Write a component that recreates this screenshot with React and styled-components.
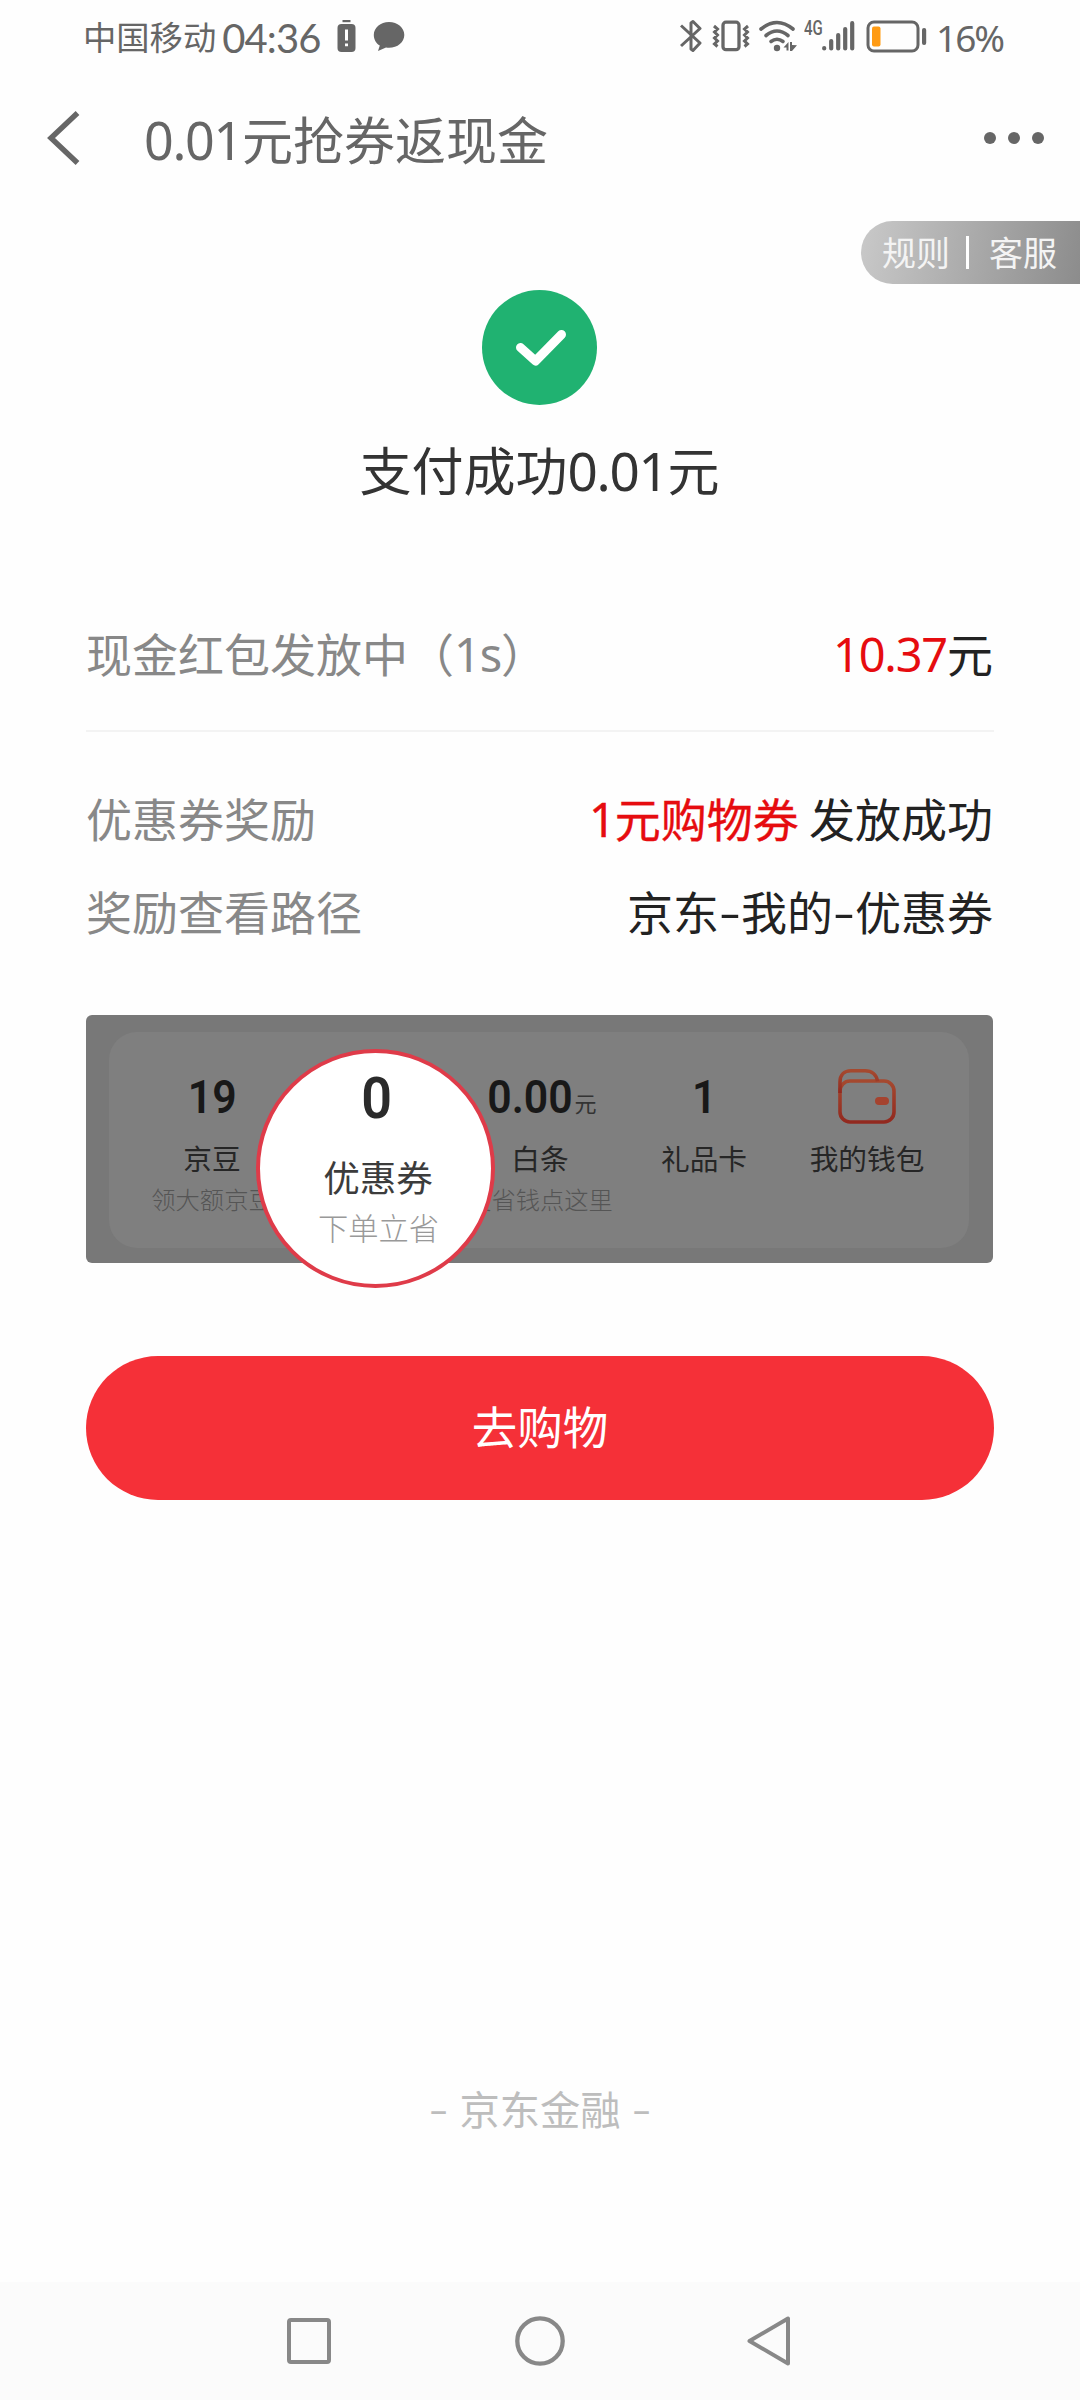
import React from "react";
import styled, { createGlobalStyle } from "styled-components";

const GlobalStyle = createGlobalStyle`
  body {
    margin: 0;
    background: #fefefe;
  }

  * {
    box-sizing: border-box;
  }
`;

const Screen = styled.div`
  display: flex;
  flex-direction: column;
  width: 1080px;
  height: 2400px;
  overflow: hidden;
  background: #fefefe;
  color: #222;
  font-family: "Noto Sans CJK SC", sans-serif;
  white-space: nowrap;
`;

/* Latin digits inside Chinese text */
const Num = styled.span`
  font-family: "Noto Sans", sans-serif;
  font-size: 1.02em;
  letter-spacing: -0.025em;
  line-height: 1;
`;

/* Status bar */
const StatusBar = styled.div`
  display: flex;
  align-items: center;
  justify-content: space-between;
  height: 72px;
  padding: 0 74px 0 83px;
  color: #666;
`;

const StatusGroup = styled.div`
  display: flex;
  align-items: center;

  svg {
    display: block;
  }
`;

const Spacer = styled.span`
  width: ${(props) => props.$width}px;
`;

const Carrier = styled.span`
  font-size: 33.3px;
  line-height: 50px;
`;

const Clock = styled.span`
  width: 98px;
  margin: 4px 17px 0 6px;
  font-family: Lato, sans-serif;
  font-size: 40px;
  letter-spacing: -0.9px;
  line-height: 50px;
`;

const Network = styled.span`
  width: 18px;
  margin: 0 0 17px 7px;
  font-family: Roboto, sans-serif;
  font-size: 20px;
  font-weight: 500;
  line-height: 20px;
  transform: scaleX(0.75);
  transform-origin: left;
`;

const Percent = styled.span`
  width: 70px;
  margin: 3px 0 0 9px;
  font-family: "Noto Sans", sans-serif;
  font-size: 37px;
  letter-spacing: -2px;
  line-height: 50px;
`;

/* Title bar */
const TitleBar = styled.div`
  display: flex;
  align-items: center;
  height: 131px;
  padding: 0 36px 0 46px;
  color: #666;
`;

const Title = styled.h1`
  flex: 1;
  margin: 0 0 0 62px;
  font-size: 51px;
  font-weight: 400;
  line-height: 74px;
`;

const HelpPill = styled.div`
  display: flex;
  align-items: center;
  align-self: flex-end;
  width: 219px;
  height: 63px;
  margin-top: 18px;
  padding-left: 21px;
  border-radius: 32px 0 0 32px;
  background: linear-gradient(100deg, #c9c9c9, #8c8c8c);
  color: #f4f4f4;
  font-size: 34px;
  line-height: 58px;

  span {
    margin-bottom: 2px;
  }
`;

const PillDivider = styled.i`
  width: 3px;
  height: 33px;
  margin: 0 20px 0 16px;
  background: #fff;
`;

/* Payment result */
const Result = styled.div`
  display: flex;
  flex-direction: column;
  align-items: center;
  margin: 6px 1px 0 0;
`;

const ResultText = styled.div`
  margin-top: 29px;
  color: #333;
  font-size: 52px;
  line-height: 70px;
`;

const Details = styled.div`
  display: flex;
  flex-direction: column;
  margin: 102px 87px 0 86px;
`;

const Row = styled.div`
  display: flex;
  justify-content: space-between;
  font-size: 46px;
  line-height: 92.5px;
`;

const Label = styled.span`
  color: #888;
`;

const Red = styled.span`
  color: #e60c0f;
  -webkit-text-stroke: ${(props) => (props.$medium ? "0.35px" : "0")} #e60c0f;
`;

const Divider = styled.div`
  height: 2px;
  margin: 31.5px -1px 39px 0;
  background: #f3f3f3;
`;

const Dash = styled.span`
  display: inline-block;
  width: ${(props) => props.$width}px;
  text-align: center;
  transform: scaleX(1.4) translateY(-1px);
`;

/* Dimmed account card with the coupon column magnified */
const Preview = styled.div`
  position: relative;
  height: 248px;
  margin-top: 59px;
  padding: 17px 24px 15px 23px;
  border-radius: 6px;
  background: #787878;
`;

const Panel = styled.div`
  display: grid;
  grid-template-columns: repeat(4, 164px) 162px;
  justify-content: center;
  height: 216px;
  padding: 37px 0 0;
  border-radius: 28px;
  background: #7f7f7f;
`;

const Column = styled.div`
  display: flex;
  flex-direction: column;
  align-items: center;
  color: #262626;
`;

const Value = styled.div`
  display: flex;
  align-items: baseline;
  justify-content: center;
  height: 56px;
  color: #181818;
  line-height: 56px;
`;

const Digits = styled.span`
  font-family: Roboto, sans-serif;
  font-size: ${(props) => props.$size || 46}px;
  font-weight: 600;
  line-height: 56px;
  transform: scaleX(0.93);
`;

const Unit = styled.span`
  margin-left: -1px;
  color: #333;
  font-size: 22px;
  transform: translateY(-1px);
`;

const Name = styled.div`
  margin-top: 12px;
  font-size: 28.7px;
  line-height: 42px;
`;

const Hint = styled.div`
  margin-top: 1px;
  color: #555;
  font-size: 24.3px;
  font-weight: 300;
  line-height: 38px;
`;

const Lens = styled.div`
  position: absolute;
  top: 34px;
  left: 170px;
  display: flex;
  flex-direction: column;
  align-items: center;
  width: 239px;
  height: 239px;
  padding: 17px 0 0 2px;
  border: 4px solid #df3b49;
  border-radius: 50%;
  background: #fff;
  color: #2b2b2b;
`;

const LensName = styled.div`
  margin: 24px 0 0 3px;
  color: #3c3c3c;
  font-size: 36.6px;
  line-height: 54px;
`;

const LensHint = styled.div`
  margin-left: 4px;
  color: #999;
  font-size: 30.3px;
  font-weight: 300;
  line-height: 46px;
`;

const ShopButton = styled.button`
  height: 144px;
  margin: 93px -1px 0 0;
  padding: 0 0 6px;
  border: 0;
  border-radius: 72px;
  background: #f53038;
  color: #fff;
  font-family: inherit;
  font-size: 45.5px;
`;

const Footer = styled.div`
  margin: auto 0 149px;
  color: #bdbdbd;
  font-size: 40.3px;
  line-height: 50px;
  text-align: center;
`;

const NavBar = styled.div`
  display: flex;
  align-items: center;
  justify-content: space-between;
  height: 118px;
  padding: 0 288px 0 285px;
  background: #fbfbfb;
`;

const BatteryAlertIcon = () => (
  <svg width="19" height="33" viewBox="0 0 19 33">
    <rect x="5.5" y="0" width="8" height="2.2" fill="#666" />
    <rect x="0.5" y="4" width="18" height="28" rx="4" fill="#666" />
    <path d="M9.5 9.5v11M9.5 23.5v2.8" stroke="#fff" strokeWidth="3" />
  </svg>
);

const ChatIcon = () => (
  <svg width="32" height="31" viewBox="0 0 32 31">
    <path
      d="M16 1C7.5 1 .8 6.8.8 14c0 4.6 2.4 8.5 6 10.5L5 30l8-3.5c1 .2 2 .3 3 .3 8.6 0 15.3-5.6 15.3-12.8S24.6 1 16 1z"
      fill="#666"
    />
  </svg>
);

const BluetoothIcon = () => (
  <svg width="22" height="34" viewBox="0 0 22 34">
    <path
      d="M1 6.5L20 24l-7 7.5-2-1.500V4l2-1.500L20 9.500 1 27"
      fill="none"
      stroke="#666"
      strokeWidth="3"
      strokeLinejoin="round"
    />
  </svg>
);

const VibrateIcon = () => (
  <svg width="38" height="32" viewBox="0 0 38 32" fill="none" stroke="#666">
    <rect x="11" y="2.2" width="16" height="27.5" rx="3" strokeWidth="3.3" />
    <path
      d="M2 6l3.500 3L2.500 12l3 3-3 3 3 3-3 3 3 2.500M36 6l-3.500 3 3 3-3 3 3 3-3 3 3 3-3 2.500"
      strokeWidth="3"
    />
  </svg>
);

const WifiIcon = () => (
  <svg width="38" height="32" viewBox="0 0 38 32">
    <g fill="none" stroke="#666" strokeWidth="3.6" strokeLinecap="round">
      <path d="M2 9Q18 -4 34 9" />
      <path d="M7 15.5Q18 6.5 29 15.5" />
      <path d="M12 21.5Q18 17 24 21.5" />
    </g>
    <circle cx="18" cy="28" r="3.2" fill="#666" />
    <path d="M24.5 27.5L29.5 22v8.5h-2v-3zM31 22h2v3l5 .2-5 5.800h-2z" fill="#666" />
  </svg>
);

const SignalIcon = () => (
  <svg width="33" height="32" viewBox="0 0 33 32">
    <path
      d="M2.2 28v.5M9.2 21v7.5M16.2 15v13.5M23.2 9v19.5M30.2 3.2v25.3"
      stroke="#666"
      strokeWidth="4.2"
      strokeLinecap="round"
    />
  </svg>
);

const BatteryIcon = () => (
  <svg width="61" height="33" viewBox="0 0 61 33">
    <rect
      x="2"
      y="2"
      width="50"
      height="29"
      rx="6"
      fill="none"
      stroke="#666"
      strokeWidth="3"
    />
    <rect x="6" y="6.5" width="8.5" height="20" rx="2" fill="#ff9b13" />
    <rect x="56" y="8" width="4.2" height="17" rx="2" fill="#666" />
  </svg>
);

const BackIcon = () => (
  <svg width="36" height="54" viewBox="0 0 36 54">
    <path d="M31.5 2L5 27l26.5 25" fill="none" stroke="#666" strokeWidth="5.4" />
  </svg>
);

const MoreIcon = () => (
  <svg width="60" height="12" viewBox="0 0 60 12" fill="#666">
    <circle cx="6" cy="6" r="6" />
    <circle cx="30" cy="6" r="6" />
    <circle cx="54" cy="6" r="6" />
  </svg>
);

const SuccessIcon = () => (
  <svg width="115" height="115" viewBox="0 0 115 115">
    <circle cx="57.5" cy="57.5" r="57.5" fill="#20b271" />
    <path
      d="M38.5 57.5L53.500 71l26-26.5"
      fill="none"
      stroke="#fff"
      strokeWidth="9"
      strokeLinecap="round"
      strokeLinejoin="round"
    />
  </svg>
);

const WalletIcon = () => (
  <svg width="58" height="56" viewBox="0 0 58 56">
    <defs>
      <linearGradient id="wallet" x1="0" y1="0" x2="0" y2="1">
        <stop offset="0" stopColor="#a5492f" />
        <stop offset="1" stopColor="#92291f" />
      </linearGradient>
    </defs>
    <g fill="none" stroke="url(#wallet)" strokeWidth="3.6">
      <rect x="2" y="12" width="54" height="41" rx="10" />
      <path d="M2 24V13C2 6 6 1.8 13 1.8h14c7 0 11.5 4 12.5 10.5" />
    </g>
    <rect x="37" y="28" width="14" height="8" rx="4" fill="#a5432f" />
  </svg>
);

const RecentsIcon = () => (
  <svg width="48" height="50" viewBox="0 0 48 50">
    <rect
      x="4"
      y="4"
      width="40"
      height="42"
      rx="2"
      fill="none"
      stroke="#888"
      strokeWidth="4"
    />
  </svg>
);

const HomeIcon = () => (
  <svg width="50" height="50" viewBox="0 0 50 50">
    <circle cx="25" cy="25" r="22.7" fill="none" stroke="#888" strokeWidth="4.3" />
  </svg>
);

const NavBackIcon = () => (
  <svg width="45" height="52" viewBox="0 0 45 52">
    <path
      d="M41 3.5v45L2.5 26z"
      fill="none"
      stroke="#888"
      strokeWidth="4"
      strokeLinejoin="round"
    />
  </svg>
);

const App = () => (
  <>
    <GlobalStyle />
    <Screen>
      <StatusBar>
        <StatusGroup>
          <Carrier>中国移动</Carrier>
          <Clock>04:36</Clock>
          <BatteryAlertIcon />
          <Spacer $width={17} />
          <ChatIcon />
        </StatusGroup>
        <StatusGroup>
          <BluetoothIcon />
          <Spacer $width={10} />
          <VibrateIcon />
          <Spacer $width={9} />
          <WifiIcon />
          <Network>4G</Network>
          <SignalIcon />
          <Spacer $width={11} />
          <BatteryIcon />
          <Percent>16%</Percent>
        </StatusGroup>
      </StatusBar>

      <TitleBar>
        <BackIcon />
        <Title>
          <Num>0.01</Num>元抢券返现金
        </Title>
        <MoreIcon />
      </TitleBar>

      <HelpPill>
        <span>规则</span>
        <PillDivider />
        <span>客服</span>
      </HelpPill>

      <Result>
        <SuccessIcon />
        <ResultText>
          支付成功<Num>0.01</Num>元
        </ResultText>
      </Result>

      <Details>
        <Row>
          <Label>
            现金红包发放中（<Num>1s</Num>）
          </Label>
          <span>
            <Red>
              <Num>10.37</Num>
            </Red>
            元
          </span>
        </Row>
        <Divider />
        <Row>
          <Label>优惠券奖励</Label>
          <span>
            <Red $medium>
              <Num>1</Num>元购物券
            </Red>{" "}
            发放成功
          </span>
        </Row>
        <Row>
          <Label>奖励查看路径</Label>
          <span>
            京东<Dash $width={22}>-</Dash>我的<Dash $width={22}>-</Dash>优惠券
          </span>
        </Row>

        <Preview>
          <Panel>
            <Column>
              <Value>
                <Digits>19</Digits>
              </Value>
              <Name>京豆</Name>
              <Hint>领大额京豆</Hint>
            </Column>
            <Column />
            <Column>
              <Value>
                <Digits>0.00</Digits>
                <Unit>元</Unit>
              </Value>
              <Name>白条</Name>
              <Hint>更省钱点这里</Hint>
            </Column>
            <Column>
              <Value>
                <Digits>1</Digits>
              </Value>
              <Name>礼品卡</Name>
            </Column>
            <Column>
              <Value>
                <WalletIcon />
              </Value>
              <Name>我的钱包</Name>
            </Column>
          </Panel>
          <Lens>
            <Digits $size={58}>0</Digits>
            <LensName>优惠券</LensName>
            <LensHint>下单立省</LensHint>
          </Lens>
        </Preview>

        <ShopButton>去购物</ShopButton>
      </Details>

      <Footer>
        <Dash $width={23}>-</Dash> 京东金融 <Dash $width={23}>-</Dash>
      </Footer>

      <NavBar>
        <RecentsIcon />
        <HomeIcon />
        <NavBackIcon />
      </NavBar>
    </Screen>
  </>
);

export default App;
